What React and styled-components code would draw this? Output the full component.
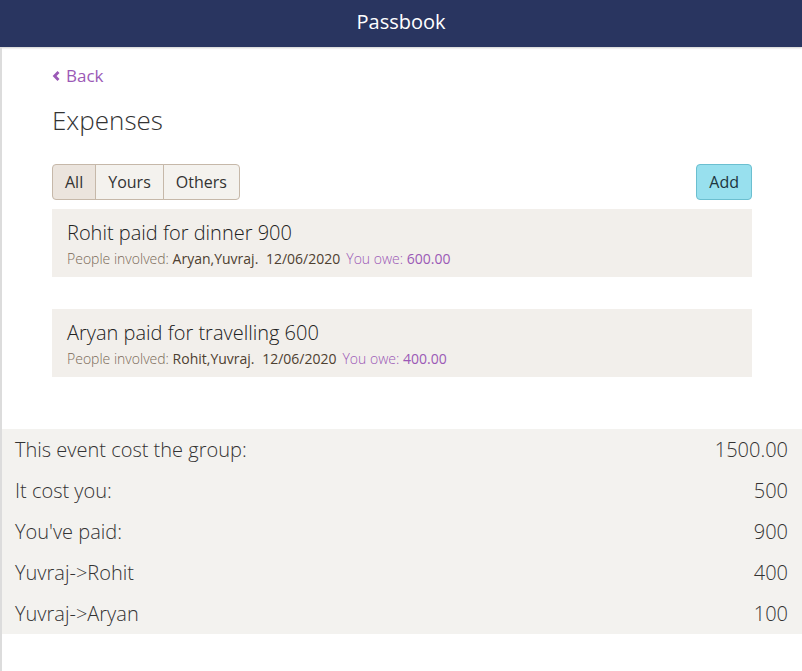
import React from "react";
import styled, { createGlobalStyle } from "styled-components";

const GlobalStyle = createGlobalStyle`
  html, body {
    margin: 0;
    padding: 0;
    background: #fff;
    font-family: "Open Sans", "Liberation Sans", sans-serif;
  }
  * { box-sizing: border-box; }
`;

const Header = styled.header`
  height: 47px;
  background-color: #293560;
  color: #fff;
  display: flex;
  align-items: center;
  justify-content: center;
  font-size: 20px;
  padding-bottom: 5px;
  box-shadow: 0 1px 2px rgba(0, 0, 0, 0.2);
`;

const Page = styled.div`
  border-left: 2px solid #dcdcdc;
  min-height: 624px;
  padding-top: 17px;
`;

const Content = styled.div`
  padding: 0 50px;
`;

const BackLink = styled.a`
  display: inline-flex;
  align-items: center;
  gap: 5px;
  color: #9b59b6;
  font-size: 17px;
  text-decoration: none;
  cursor: pointer;
`;

const Title = styled.h1`
  margin: 15px 0 0;
  font-size: 26px;
  font-weight: 300;
  color: #333;
  line-height: 36px;
`;

const Toolbar = styled.div`
  margin-top: 26px;
  display: flex;
  justify-content: space-between;
  align-items: center;
`;

const Group = styled.div`
  display: flex;
`;

const TabButton = styled.button`
  height: 36px;
  padding: 0 12px;
  font-family: inherit;
  font-size: 16px;
  color: #333;
  background-color: ${(p) => (p.active ? "#ebe4dd" : "#f4f2ee")};
  border: 1px solid #c6b8a9;
  border-radius: ${(p) =>
    p.first ? "4px 0 0 4px" : p.last ? "0 4px 4px 0" : "0"};
  cursor: pointer;
  &:not(:first-child) {
    margin-left: -1px;
  }
`;

const AddButton = styled.button`
  height: 36px;
  padding: 0 12px;
  font-family: inherit;
  font-size: 16px;
  color: #1d3640;
  background-color: #98e0ee;
  border: 1px solid #6bbfd0;
  border-radius: 4px;
  cursor: pointer;
`;

const List = styled.div`
  margin-top: 9px;
  display: flex;
  flex-direction: column;
  gap: 32px;
`;

const Card = styled.div`
  background-color: #f2efeb;
  padding: 10px 15px;
  height: 68px;
`;

const CardTitle = styled.div`
  font-size: 20px;
  font-weight: 300;
  color: #222;
  line-height: 28px;
`;

const Meta = styled.div`
  margin-top: 2px;
  font-size: 14px;
  font-weight: 300;
  line-height: 19px;
  color: #7a6a58;
  white-space: nowrap;
`;

const Strong = styled.span`
  color: ${(p) => (p.accent ? "#9b59b6" : "#4e4030")};
  font-weight: 400;
  margin-left: ${(p) => (p.spaced ? "4px" : "0")};
`;

const Accent = styled.span`
  color: #9b59b6;
  margin-left: 6px;
`;

const Summary = styled.div`
  margin-top: 52px;
  background-color: #f3f2ef;
  padding: 0 14px 0 13px;
`;

const SummaryRow = styled.div`
  height: 41px;
  display: flex;
  align-items: center;
  justify-content: space-between;
  font-size: 20px;
  color: #333;
  font-weight: 300;
`;

const expenses = [
  {
    title: "Rohit paid for dinner 900",
    people: "Aryan,Yuvraj",
    date: "12/06/2020",
    owe: "600.00",
  },
  {
    title: "Aryan paid for travelling 600",
    people: "Rohit,Yuvraj",
    date: "12/06/2020",
    owe: "400.00",
  },
];

const totals = [
  ["This event cost the group:", "1500.00"],
  ["It cost you:", "500"],
  ["You've paid:", "900"],
  ["Yuvraj->Rohit", "400"],
  ["Yuvraj->Aryan", "100"],
];

const App = () => {
  return (
    <>
      <GlobalStyle />
      <Header>Passbook</Header>
      <Page>
        <Content>
          <BackLink>
            <svg width="9" height="12" viewBox="0 0 9 12">
              <path
                d="M6.5 2 L2.6 6 L6.5 10"
                fill="none"
                stroke="#9b59b6"
                strokeWidth="2.8"
              />
            </svg>
            Back
          </BackLink>
          <Title>Expenses</Title>
          <Toolbar>
            <Group>
              <TabButton first active>
                All
              </TabButton>
              <TabButton>Yours</TabButton>
              <TabButton last>Others</TabButton>
            </Group>
            <AddButton>Add</AddButton>
          </Toolbar>
          <List>
            {expenses.map((e) => (
              <Card key={e.title}>
                <CardTitle>{e.title}</CardTitle>
                <Meta>
                  People involved: <Strong>{e.people}.</Strong>{" "}
                  <Strong spaced>{e.date}</Strong>
                  <Accent>
                    You owe: <Strong accent>{e.owe}</Strong>
                  </Accent>
                </Meta>
              </Card>
            ))}
          </List>
        </Content>
        <Summary>
          {totals.map(([label, value]) => (
            <SummaryRow key={label}>
              <span>{label}</span>
              <span>{value}</span>
            </SummaryRow>
          ))}
        </Summary>
      </Page>
    </>
  );
};

export default App;
